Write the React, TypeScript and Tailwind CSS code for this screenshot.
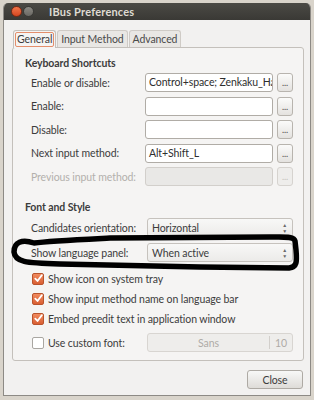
import React from "react";

const font = { fontFamily: "Lato, 'Open Sans', sans-serif" };

function Dots({ disabled = false }: { disabled?: boolean }) {
  return (
    <div
      className={`flex h-[19px] w-[16px] items-end justify-center rounded-[3px] border pb-[4px] text-[9px] leading-none ${
        disabled
          ? "border-[#d6d3cf] bg-[#eeedeb] text-[#c2bfbb]"
          : "border-[#b8b4ae] bg-gradient-to-b from-[#fbfbfa] to-[#e4e2df] text-[#4a4a4a]"
      }`}
    >
      ...
    </div>
  );
}

function ShortcutRow({ label, value, disabled = false }: { label: string; value?: string; disabled?: boolean }) {
  return (
    <div className="flex h-[19px] items-center">
      <div className={`w-[132px] shrink-0 whitespace-nowrap pl-[18px] ${disabled ? "text-[#b3b0ac]" : "text-[#3c3c3c]"}`}>
        {label}
      </div>
      <div
        className={`h-[19px] w-[128px] shrink-0 overflow-hidden whitespace-nowrap rounded-[3px] border px-[3px] leading-[17px] ${
          disabled ? "border-[#d2cfcb] bg-[#e9e8e6]" : "border-[#b0aca6] bg-white text-[#2e2e2e]"
        }`}
      >
        {value}
      </div>
      <div className="ml-[4px]">
        <Dots disabled={disabled} />
      </div>
    </div>
  );
}

function Combo({ label, value }: { label: string; value: string }) {
  return (
    <div className="flex h-[19px] items-center">
      <div className="w-[134px] shrink-0 whitespace-nowrap pl-[18px] text-[#3c3c3c]">{label}</div>
      <div className="flex h-[19px] w-[146px] shrink-0 items-center justify-between rounded-[3px] border border-[#c6c2bd] bg-gradient-to-b from-[#f8f8f7] to-[#ecebe9] pl-[4px] pr-[5px] text-[#3c3c3c]">
        <span>{value}</span>
        <span className="flex flex-col items-center text-[5px] leading-[6px] text-[#6a6a6a]">
          <span>▲</span>
          <span>▼</span>
        </span>
      </div>
    </div>
  );
}

function Check({ label, checked = true }: { label: string; checked?: boolean }) {
  return (
    <div className="flex h-[17px] items-center whitespace-nowrap pl-[19px] text-[#3c3c3c]">
      {checked ? (
        <div className="flex h-[12px] w-[12px] items-center justify-center rounded-[2px] border border-[#b9532c] bg-gradient-to-b from-[#f08a5e] to-[#d95f33]">
          <svg width="9" height="9" viewBox="0 0 9 9">
            <path d="M1.3 4.6 L3.5 7 L7.8 1.2" stroke="white" strokeWidth="1.8" fill="none" strokeLinecap="round" strokeLinejoin="round" />
          </svg>
        </div>
      ) : (
        <div className="h-[12px] w-[12px] rounded-[2px] border border-[#a9a6a1] bg-white" />
      )}
      <span className="ml-[4px]">{label}</span>
    </div>
  );
}

export default function App() {
  return (
    <div
      className="h-[400px] w-[314px] overflow-hidden bg-[#d9d4cb] pl-[3px] pt-[3px] text-[10.5px] leading-[16px] tracking-[-0.1px]"
      style={font}
    >
      <div className="relative flex h-[393px] w-[308px] flex-col overflow-hidden rounded-t-[5px] border-l border-r border-b border-[#8d8a85] bg-[#f2f1f0]">
        {/* title bar */}
        <div className="flex h-[17px] items-center bg-gradient-to-b from-[#4b4a45] to-[#3a3935] pl-[7px]">
          <div className="h-[11px] w-[11px] rounded-full border border-[#7a2a15] bg-gradient-to-b from-[#f2764a] to-[#d6461f]" />
          <div className="ml-[1px] h-[11px] w-[11px] rounded-full border border-[#3a3a37] bg-gradient-to-b from-[#8c8a84] to-[#6a6863]" />
          <span className="ml-[15px] text-[11px] font-bold tracking-[0.2px] text-[#dfdbd2]">IBus Preferences</span>
        </div>

        {/* tabs */}
        <div className="mt-[10px] flex items-end pl-[9px]">
          <div className="relative z-10 -mb-px flex h-[18px] items-center rounded-t-[3px] border border-b-0 border-[#c4c0bb] bg-[#f5f4f3] px-[1px]">
            <span className="rounded-[2px] border border-[#e48e6b] px-[1px] leading-[13px] text-[#3c3c3c]">General</span>
          </div>
          <div className="ml-[1px] flex h-[17px] items-center rounded-t-[3px] border border-b-0 border-[#cfcbc6] bg-[#e9e7e4] px-[3px] text-[#4a4a4a]">
            Input Method
          </div>
          <div className="ml-[1px] flex h-[17px] items-center rounded-t-[3px] border border-b-0 border-[#cfcbc6] bg-[#e9e7e4] px-[3px] text-[#4a4a4a]">
            Advanced
          </div>
        </div>

        {/* notebook page */}
        <div className="relative ml-[8px] h-[314px] w-[292px] rounded-[3px] border border-[#c4c0bb] bg-[#f5f4f3]">
          <div className="pl-[12px] pt-[7px] font-bold text-[#3c3c3c]">Keyboard Shortcuts</div>
          <div className="mt-[2px] flex flex-col gap-[4.6px]">
            <ShortcutRow label="Enable or disable:" value="Control+space; Zenkaku_Hankaku" />
            <ShortcutRow label="Enable:" />
            <ShortcutRow label="Disable:" />
            <ShortcutRow label="Next input method:" value="Alt+Shift_L" />
            <ShortcutRow label="Previous input method:" disabled />
          </div>

          <div className="pl-[12px] pt-[13px] font-bold text-[#3c3c3c]">Font and Style</div>
          <div className="mt-[3px] flex flex-col gap-[6px]">
            <Combo label="Candidates orientation:" value="Horizontal" />
            <Combo label="Show language panel:" value="When active" />
          </div>

          <div className="mt-[8px] flex flex-col gap-[3px]">
            <Check label="Show icon on system tray" />
            <Check label="Show input method name on language bar" />
            <Check label="Embed preedit text in application window" />
            <div className="mt-[3px] flex items-center">
              <div className="w-[134px] shrink-0">
                <Check label="Use custom font:" checked={false} />
              </div>
              <div className="flex h-[19px] w-[146px] shrink-0 items-center rounded-[3px] border border-[#d8d5d1] bg-[#eeedeb] text-[#aeaba7]">
                <span className="flex-1 text-center">Sans</span>
                <span className="h-[13px] border-l border-[#d2cfcb]" />
                <span className="w-[22px] text-center">10</span>
              </div>
            </div>
          </div>

          {/* marker scribble over the language panel row */}
          <svg className="pointer-events-none absolute left-[-13px] top-[-48px]" width="300" height="330" viewBox="0 0 300 330">
            <path
              d="M34 243 C22 239 14 242 14 252 C15 262 25 263 60 264 L200 267 L289 268 C297 267 297 262 296 250 L295 241 C294 236 285 237 270 237 L110 238 C70 240 48 241 34 243 Z"
              fill="none"
              stroke="#000"
              strokeWidth="5.5"
              strokeLinejoin="round"
            />
          </svg>
        </div>

        {/* footer */}
        <div className="mt-[9px] flex justify-end pr-[7px]">
          <div className="flex h-[19px] w-[56px] items-center justify-center rounded-[3px] border border-[#aeaaa4] bg-gradient-to-b from-[#f8f8f7] to-[#dedcd8] text-[#3c3c3c]">
            Close
          </div>
        </div>
      </div>
    </div>
  );
}
